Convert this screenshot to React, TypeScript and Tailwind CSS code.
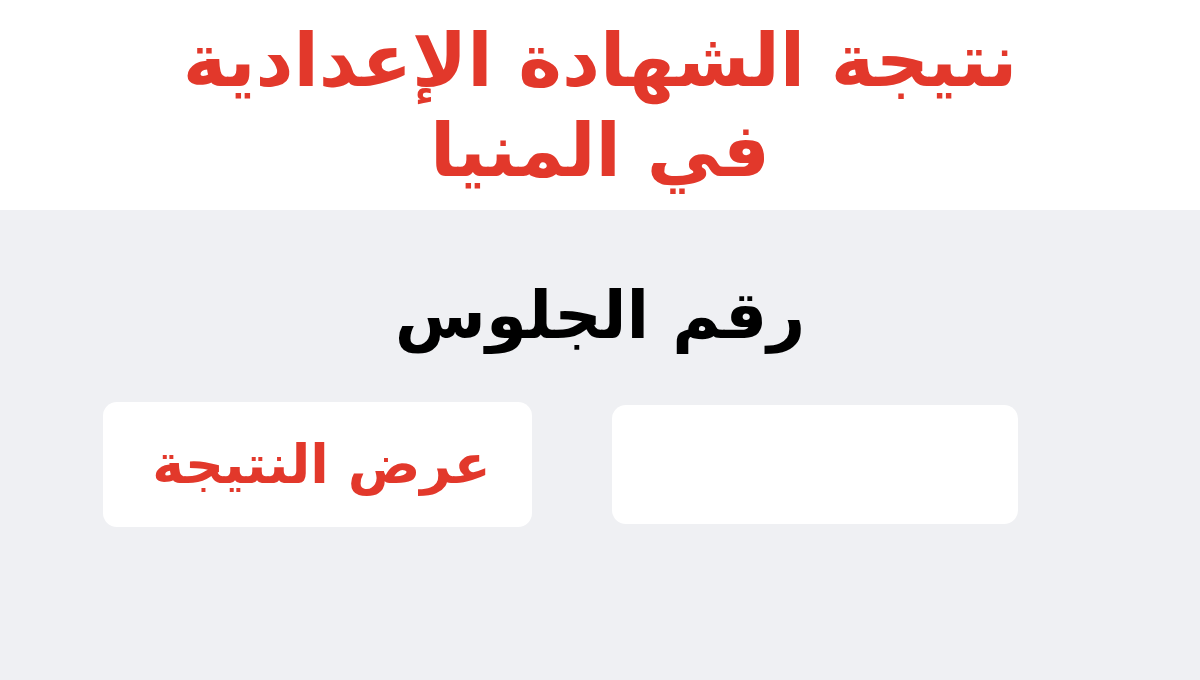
import React from "react";

const arabic = { fontFamily: '"DejaVu Sans", "Noto Sans", sans-serif' };

export default function App() {
  return (
    <div className="w-[1200px] h-[680px] flex flex-col bg-[#eff0f3] overflow-hidden" style={arabic}>
      <header className="h-[210px] bg-white flex flex-col items-center justify-center" dir="rtl">
        <h1 className="text-[#e2382b] font-bold text-[74px] leading-[90px] text-center">
          نتيجة الشهادة الإعدادية
          <br />
          في المنيا
        </h1>
      </header>

      <main className="flex flex-col flex-1">
        <h2 className="mt-[58px] text-center text-black font-bold text-[66px] leading-[96px]" dir="rtl">
          رقم الجلوس
        </h2>

        <div className="mt-[38px] flex items-center gap-[80px] pl-[103px]">
          <button
            type="button"
            className="w-[429px] h-[125px] bg-white rounded-[14px] flex items-center justify-center pl-[8px] text-[#e2382b] font-bold text-[54px]"
            dir="rtl"
          >
            عرض النتيجة
          </button>
          <input
            type="text"
            dir="rtl"
            className="w-[406px] h-[119px] bg-white rounded-[14px] outline-none px-6 text-[40px]"
          />
        </div>
      </main>
    </div>
  );
}
